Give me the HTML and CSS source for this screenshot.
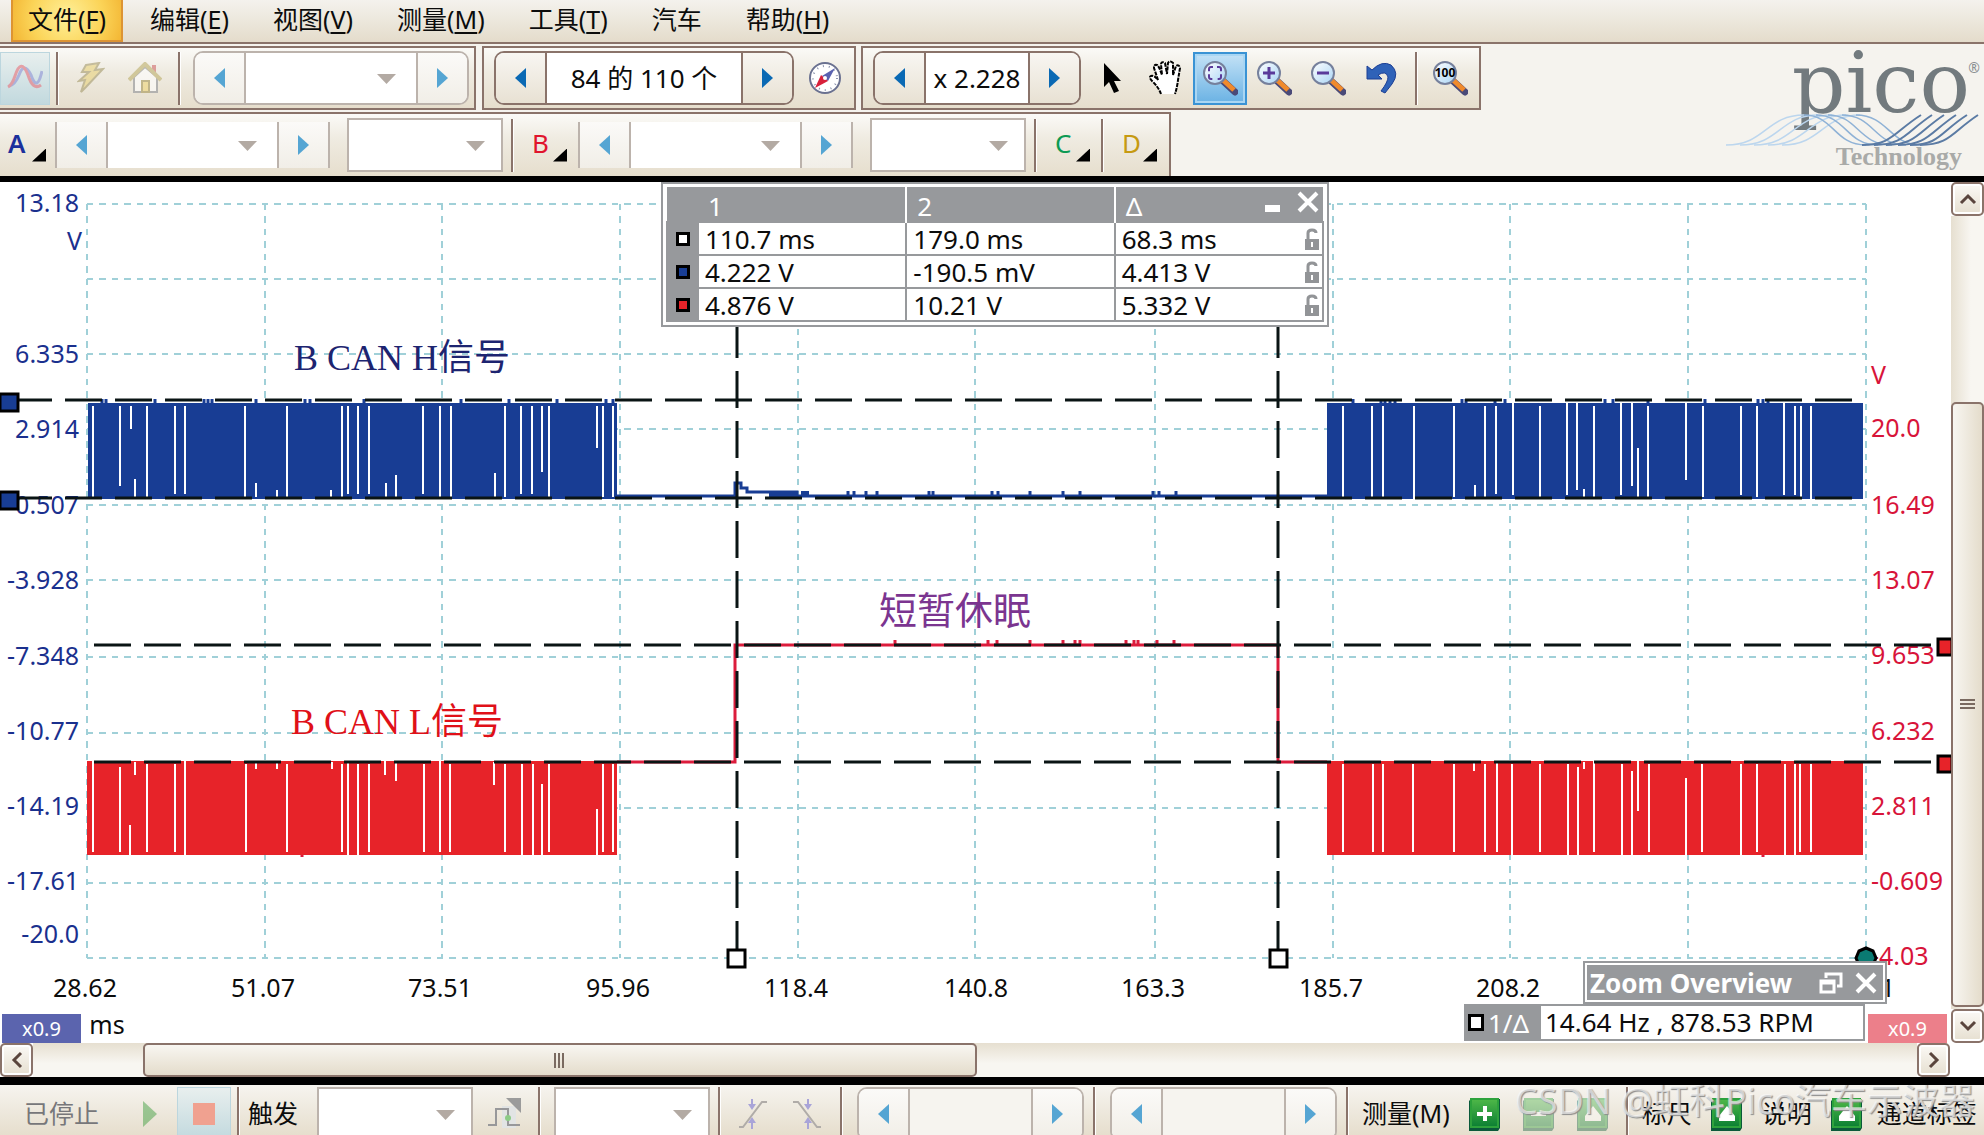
FILE: index.html
```html
<!DOCTYPE html>
<html lang="zh-CN">
<head>
    <meta charset="UTF-8">
    <meta name="viewport" content="width=device-width, initial-scale=1.0">
    <title>PicoScope</title>
    <link rel="stylesheet" href="styles.css">
</head>
<body>
    <!-- shared icon shapes -->
    <svg class="defs" width="0" height="0" aria-hidden="true">
        <defs>
            <linearGradient id="lensFill" x1="0" y1="0" x2="1" y2="1">
                <stop offset="0" stop-color="#ffffff"/>
                <stop offset="1" stop-color="#a9d4f5"/>
            </linearGradient>
            <linearGradient id="greenFill" x1="0" y1="0" x2="0" y2="1">
                <stop offset="0" stop-color="#4fb848"/>
                <stop offset="1" stop-color="#0b7f33"/>
            </linearGradient>
            <symbol id="lens" viewBox="0 0 36 36">
                <path d="M20 20L33 32" stroke="#4a4a78" stroke-width="7" stroke-linecap="round"/>
                <path d="M21 20L32 30" stroke="#f08a2c" stroke-width="5"/>
                <circle cx="13" cy="13" r="11" fill="url(#lensFill)" stroke="#76809c" stroke-width="2"/>
            </symbol>
            <symbol id="lock" viewBox="0 0 16 22">
                <path d="M4 12V5q0-3 4-3t4 3" fill="none" stroke="#929497" stroke-width="3"/>
                <path d="M1 11h14v11H1z" fill="#929497"/>
                <path d="M7 14h2v5H7z" fill="#fff"/>
            </symbol>
            <symbol id="green" viewBox="0 0 34 34">
                <path d="M3 2h29v29l-2 3H1V4z" fill="#0a5a3a"/>
                <path d="M3 2h27v28H3z" fill="url(#greenFill)" stroke="#2da23c" stroke-width="2"/>
            </symbol>
        </defs>
    </svg>

    <nav class="menu">
        <button class="menu-item active">文件(<u>F</u>)</button>
        <button class="menu-item">编辑(<u>E</u>)</button>
        <button class="menu-item">视图(<u>V</u>)</button>
        <button class="menu-item">测量(<u>M</u>)</button>
        <button class="menu-item">工具(<u>T</u>)</button>
        <button class="menu-item">汽车</button>
        <button class="menu-item">帮助(<u>H</u>)</button>
    </nav>

    <header class="top">
        <div class="toolbar">
            <div class="group first">
                <button class="tool pressed faded" aria-label="示波器模式">
                    <svg width="36" height="30" viewBox="0 0 36 30" fill="none" stroke-width="3">
                        <path d="M2 23Q8 22 12 12Q17-2 24 12Q30 30 35 8" stroke="#8f93d6"/>
                        <path d="M1 24Q5 22 8 13Q14-6 21 12Q26 28 34 22" stroke="#e8707a"/>
                    </svg>
                </button>
                <span class="sep"></span>
                <button class="tool faded" aria-label="触发">
                    <svg width="28" height="32" viewBox="0 0 28 32">
                        <path d="M9 3l13-2-4 7 8-1L9 25l-5 5 4-12-6 1 10-9H5z" fill="#e8d27c" stroke="#a59a6a" stroke-width="2"/>
                    </svg>
                </button>
                <button class="tool faded" aria-label="主页">
                    <svg width="34" height="32" viewBox="0 0 34 32">
                        <path d="M24 3h4v10h-4z" fill="#d06a6a"/>
                        <path d="M6 15v15h23V15L17 5z" fill="#fff" stroke="#8f9298" stroke-width="2"/>
                        <path d="M1 18L17 2l16 16" fill="none" stroke="#bdb06c" stroke-width="4"/>
                        <path d="M14 19h7v11h-7z" fill="#efd67a" stroke="#a59555" stroke-width="2"/>
                    </svg>
                </button>
                <span class="sep"></span>
                <div class="spinner off indent">
                    <button class="prev" aria-label="上一个"></button>
                    <span class="combo"><select aria-label="时基"><option></option></select></span>
                    <button class="next" aria-label="下一个"></button>
                </div>
            </div>
            <div class="group">
                <div class="spinner">
                    <button class="prev" aria-label="上一波形"></button>
                    <input class="buffer" type="text" value="84 的 110 个" aria-label="波形缓冲">
                    <button class="next" aria-label="下一波形"></button>
                </div>
                <button class="tool" aria-label="缓冲导航">
                    <svg width="34" height="34" viewBox="0 0 34 34">
                        <circle cx="17" cy="17" r="15" fill="#fff" stroke="#6a7190" stroke-width="2"/>
                        <circle cx="17" cy="17" r="12" fill="none" stroke="#8c93ad" stroke-width="2" stroke-dasharray="1 5"/>
                        <path d="M27 7L20 20l-6-5z" fill="#5a62b0"/>
                        <path d="M7 27l6-13 7 6z" fill="#d8203a"/>
                        <circle cx="17" cy="17" r="2" fill="#fff"/>
                    </svg>
                </button>
            </div>
            <div class="group">
                <div class="spinner">
                    <button class="prev" aria-label="缩小倍率"></button>
                    <input class="factor" type="text" value="x 2.228" aria-label="缩放倍率">
                    <button class="next" aria-label="放大倍率"></button>
                </div>
                <button class="tool" aria-label="选择">
                    <svg width="20" height="32" viewBox="0 0 20 32">
                        <path d="M2 1v24l5-5 5 11 5-2-5-10h7z" fill="#000"/>
                    </svg>
                </button>
                <button class="tool" aria-label="拖动">
                    <svg width="36" height="36" viewBox="0 0 36 36">
                        <path d="M13 34Q11 28 5 22Q0 17 3 16Q6 15 10 20L6 8Q6 4 9 5Q11 6 14 15L13 4Q14 1 17 3L19 14L20 3Q22 0 25 3L25 15L28 6Q31 4 32 8L30 20Q29 28 27 34" fill="#fff" stroke="#000" stroke-width="2" stroke-dasharray="4 1"/>
                    </svg>
                </button>
                <button class="tool selected" aria-label="窗口缩放">
                    <svg width="36" height="36" viewBox="0 0 36 36"><use href="#lens"/><path d="M11 7H9q-2 0-2 2v8q0 2 2 2h2M15 7h2q2 0 2 2v8q0 2-2 2h-2" fill="none" stroke="#5a3a9a" stroke-width="2" stroke-dasharray="7 3"/></svg>
                </button>
                <button class="tool" aria-label="放大">
                    <svg width="36" height="36" viewBox="0 0 36 36"><use href="#lens"/><path d="M13 7v12M7 13h12" stroke="#5a3a9a" stroke-width="3"/></svg>
                </button>
                <button class="tool" aria-label="缩小">
                    <svg width="36" height="36" viewBox="0 0 36 36"><use href="#lens"/><path d="M7 13h12" stroke="#5a3a9a" stroke-width="3"/></svg>
                </button>
                <button class="tool" aria-label="撤销缩放">
                    <svg width="32" height="32" viewBox="0 0 32 32">
                        <path d="M1 4l5 4Q16-2 25 3Q34 11 26 22L19 31l-4-2Q22 20 22 15Q20 8 12 13l4 4H1z" fill="#2f62b8" stroke="#1d3f94"/>
                    </svg>
                </button>
                <span class="sep"></span>
                <button class="tool" aria-label="完整显示">
                    <svg width="36" height="36" viewBox="0 0 36 36"><use href="#lens"/><text x="13" y="17" class="hundred">100</text></svg>
                </button>
            </div>
        </div>

        <div class="toolbar">
            <div class="group channels">
                <button class="channel ch-a">A</button>
                <div class="spinner flat off">
                    <button class="prev" aria-label="A 减小量程"></button>
                    <span class="combo"><select aria-label="A 量程"><option></option></select></span>
                    <button class="next" aria-label="A 增大量程"></button>
                </div>
                <span class="combo boxed"><select aria-label="A 耦合"><option></option></select></span>
                <span class="sep"></span>
                <button class="channel ch-b">B</button>
                <div class="spinner flat off">
                    <button class="prev" aria-label="B 减小量程"></button>
                    <span class="combo"><select aria-label="B 量程"><option></option></select></span>
                    <button class="next" aria-label="B 增大量程"></button>
                </div>
                <span class="combo boxed"><select aria-label="B 耦合"><option></option></select></span>
                <span class="sep"></span>
                <button class="channel ch-c">C</button>
                <span class="sep"></span>
                <button class="channel ch-d">D</button>
            </div>
        </div>

        <div class="logo">
            <span class="logo-name">pico</span><span class="logo-reg">®</span>
            <svg class="logo-wave" width="254" height="36" viewBox="0 0 254 36" fill="none" stroke-width="1.5">
                <g stroke="#bcd6ee">
                    <path d="M0 33C40 33 40 3 78 3"/><path d="M14 33C54 33 54 3 92 3"/>
                    <path d="M28 33C68 33 68 3 106 3"/><path d="M42 33C82 33 82 3 120 3"/>
                    <path d="M56 33C96 33 96 3 134 3"/>
                </g>
                <g stroke="#8fb2d6">
                    <path d="M78 3C108 3 108 33 140 33"/><path d="M90 3C120 3 120 33 152 33"/>
                    <path d="M102 3C132 3 132 33 166 33"/><path d="M116 3C148 3 148 33 180 33"/>
                    <path d="M130 3C162 3 164 33 194 33"/>
                </g>
                <g stroke="#5b7ba4" stroke-width="2">
                    <path d="M136 33C166 33 168 20 195 3"/><path d="M148 33C178 33 180 20 206 3"/>
                    <path d="M160 33C190 33 192 20 218 3"/><path d="M172 33C202 33 204 20 230 3"/>
                    <path d="M184 33C214 33 214 20 241 3"/><path d="M194 33C224 33 226 20 252 3"/>
                </g>
            </svg>
            <span class="logo-sub">Technology</span>
        </div>
    </header>

    <main class="scope">
        <div class="view">
            <svg class="plot" viewBox="0 182 1951 861">
                <g class="grid">
                    <path d="M87 204H1866M87 279H1866M87 354H1866M87 429H1866M87 505H1866M87 580H1866M87 657H1866M87 733H1866M87 808H1866M87 883H1866M87 958H1866"/>
                    <path d="M87 204V958M265 204V958M442 204V958M620 204V958M798 204V958M975 204V958M1155 204V958M1333 204V958M1510 204V958M1688 204V958M1866 204V958"/>
                </g>

                <g class="axis axis-a">
                    <text x="79" y="212">13.18</text>
                    <text x="82" y="250">V</text>
                    <text x="79" y="363">6.335</text>
                    <text x="79" y="438">2.914</text>
                    <text x="79" y="514">0.507</text>
                    <text x="79" y="589">-3.928</text>
                    <text x="79" y="665">-7.348</text>
                    <text x="79" y="740">-10.77</text>
                    <text x="79" y="815">-14.19</text>
                    <text x="79" y="890">-17.61</text>
                    <text x="79" y="943">-20.0</text>
                </g>
                <g class="axis axis-b">
                    <text x="1871" y="384">V</text>
                    <text x="1871" y="437">20.0</text>
                    <text x="1871" y="514">16.49</text>
                    <text x="1871" y="589">13.07</text>
                    <text x="1871" y="664">9.653</text>
                    <text x="1871" y="740">6.232</text>
                    <text x="1871" y="815">2.811</text>
                    <text x="1871" y="890">-0.609</text>
                    <text x="1871" y="965">-4.03</text>
                </g>
                <g class="axis axis-t">
                    <text x="85" y="997">28.62</text>
                    <text x="263" y="997">51.07</text>
                    <text x="440" y="997">73.51</text>
                    <text x="618" y="997">95.96</text>
                    <text x="796" y="997">118.4</text>
                    <text x="976" y="997">140.8</text>
                    <text x="1153" y="997">163.3</text>
                    <text x="1331" y="997">185.7</text>
                    <text x="1508" y="997">208.2</text>
                    <text x="1863" y="997">253.1</text>
                    <text x="107" y="1034">ms</text>
                </g>

                <!-- channel A: CAN H -->
                <g class="trace-a">
                    <path class="burst" d="M88 403H617V499H88zM1327 403H1863V499H1327z"/>
                    <path class="slit" d="M93 406V497M120 406V486M131 406V429M135 479V497M147 406V497M175 406V494M185 406V494M245 406V497M256 483V497M277 490V497M287 406V497M331 490V497M342 406V497M348 406V494M358 406V494M369 406V494M386 483V497M396 475V497M423 406V494M440 406V497M451 406V497M495 473V497M505 406V497M521 406V494M532 406V494M542 406V472M549 406V497M597 406V448M603 406V497M613 406V497"/>
                    <path class="slit" d="M1343 406V497M1372 406V497M1383 406V497M1414 406V499M1454 406V497M1475 485V497M1485 406V497M1496 406V494M1513 403V495M1540 406V497M1567 403V495M1577 403V490M1584 489V497M1594 406V497M1621 403V495M1632 403V486M1638 448V497M1648 406V497M1686 403V480M1703 406V497M1741 406V495M1757 406V497M1784 403V495M1795 406V495M1801 406V497M1811 406V499"/>
                    <path class="line" d="M102 404V399M106 404V399M155 404V399M204 404V399M208 404V399M212 404V399M256 404V399M305 404V399M310 404V399M364 404V399M461 404V399M509 404V399M557 404V399M606 404V399M613 404V399M1353 404V399M1381 404V399M1385 404V399M1390 404V399M1395 404V399M1462 404V399M1466 404V399M1495 404V399M1505 404V399M1605 404V399M1613 404V399M1648 404V399M1705 404V399M1758 404V399M1763 404V399M1768 404V399"/>
                    <path class="line" d="M617 496H735V483H741V488H747V492H797V496H1327"/>
                    <path class="burst" d="M769 491h28v6h-28zM801 491h8v6h-8z"/>
                    <path class="line" d="M848 496v-5M854 496v-5M866 496v-5M877 496v-5M929 496v-5M933 496v-5M992 496v-5M998 496v-5M1030 496v-5M1063 496v-5M1080 496v-5M1153 496v-5M1159 496v-5M1176 496v-5"/>
                </g>

                <!-- channel B: CAN L -->
                <g class="trace-b">
                    <path class="burst" d="M87 761H617V855H87zM1327 761H1863V855H1327z"/>
                    <path class="slit" d="M93 761V852M120 767V852M130 825V855M135 762V775M147 764V852M175 764V852M185 761V855M246 764V852M256 762V769M277 762V769M287 764V852M332 762V769M342 764V852M348 761V855M358 764V855M369 764V852M385 761V775M396 762V781M424 764V852M440 761V852M450 764V852M494 762V785M505 764V852M522 764V855M533 764V855M542 784V855M549 764V852M597 809V855M603 764V852M613 764V852"/>
                    <path class="slit" d="M1343 764V852M1373 764V852M1383 764V852M1413 764V852M1454 764V852M1474 762V771M1485 764V852M1497 761V852M1512 764V855M1540 764V852M1568 764V855M1578 767V855M1584 762V769M1594 761V852M1622 764V855M1632 771V855M1638 761V811M1649 764V852M1686 778V855M1702 764V852M1741 764V855M1757 764V852M1785 764V855M1795 764V855M1800 764V852M1811 764V852"/>
                    <path class="line" d="M617 762H735V645H1278V762H1327"/>
                    <path class="line" d="M302 855v2M1763 855v2M895 645v-5M988 645v-5M997 645v-5M1030 645v-5M1063 645v-5M1075 645v-5M1080 645v-5M1126 645v-5M1134 645v-5M1138 645v-5M1157 645v-5M1174 645v-5"/>
                </g>

                <!-- rulers -->
                <g class="ruler">
                    <path d="M15 400H1860M15 498H1860"/>
                    <path d="M94 645H1937M94 762H1937"/>
                    <path d="M737 321V949M1278 321V949"/>
                </g>
                <g class="handle">
                    <path class="fill-a" d="M0 394H18V411H0zM0 492H18V509H0z"/>
                    <path class="fill-b" d="M1938 639H1952V655H1938zM1938 756H1952V772H1938z"/>
                    <path class="fill-t" d="M728 950H745V967H728zM1270 950H1287V967H1270z"/>
                    <path class="fill-zoom" d="M1856 958l3-7 7-3 7 3 3 7-3 7H1859z"/>
                </g>

                <g class="note">
                    <text x="294" y="370" class="note-h">B CAN H信号</text>
                    <text x="291" y="734" class="note-l">B CAN L信号</text>
                    <text x="879" y="624" class="note-sleep">短暂休眠</text>
                </g>
            </svg>

            <div class="rulers-box">
                <table>
                    <thead>
                        <tr>
                            <th></th>
                            <th>1</th>
                            <th>2</th>
                            <th>Δ
                                <span class="win-buttons">
                                    <button aria-label="最小化"><svg width="16" height="22" viewBox="0 0 16 22"><path d="M0 14h15v7H0z" fill="#fff"/></svg></button>
                                    <button aria-label="关闭"><svg width="22" height="22" viewBox="0 0 22 22"><path d="M2 2l18 18M20 2L2 20" stroke="#fff" stroke-width="4"/></svg></button>
                                </span>
                            </th>
                        </tr>
                    </thead>
                    <tbody>
                        <tr>
                            <td><i class="mark white"></i></td>
                            <td>110.7 ms</td>
                            <td>179.0 ms</td>
                            <td>68.3 ms <svg class="lock" width="16" height="22"><use href="#lock"/></svg></td>
                        </tr>
                        <tr>
                            <td><i class="mark blue"></i></td>
                            <td>4.222 V</td>
                            <td>-190.5 mV</td>
                            <td>4.413 V <svg class="lock" width="16" height="22"><use href="#lock"/></svg></td>
                        </tr>
                        <tr>
                            <td><i class="mark red"></i></td>
                            <td>4.876 V</td>
                            <td>10.21 V</td>
                            <td>5.332 V <svg class="lock" width="16" height="22"><use href="#lock"/></svg></td>
                        </tr>
                    </tbody>
                </table>
            </div>

            <button class="scale scale-a">x0.9</button>
            <button class="scale scale-b">x0.9</button>

            <div class="freq">
                <span class="freq-key"><i class="mark white"></i>1/Δ</span>
                <span class="freq-value">14.64 Hz , 878.53 RPM</span>
            </div>
            <div class="overview">
                <span class="overview-title">Zoom Overview</span>
                <button aria-label="还原"><svg width="24" height="24" viewBox="0 0 24 24" fill="none" stroke="#fff" stroke-width="3"><path d="M7 7V3h15v12h-4M2 10h13v11H2zM2 12h13"/></svg></button>
                <button aria-label="关闭"><svg width="22" height="22" viewBox="0 0 22 22"><path d="M2 2l18 18M20 2L2 20" stroke="#fff" stroke-width="4"/></svg></button>
            </div>
        </div>

        <div class="vscroll">
            <button aria-label="向上"><svg width="18" height="12" viewBox="0 0 18 12"><path d="M2 10l7-7 7 7"/></svg></button>
            <div class="track"><div class="thumb"><i class="grip"></i></div></div>
            <button aria-label="向下"><svg width="18" height="12" viewBox="0 0 18 12"><path d="M2 2l7 7 7-7"/></svg></button>
        </div>
    </main>

    <div class="hscroll">
        <button aria-label="向左"><svg width="12" height="18" viewBox="0 0 12 18"><path d="M10 2L3 9l7 7"/></svg></button>
        <div class="track"><div class="thumb"><i class="grip"></i></div></div>
        <button aria-label="向右"><svg width="12" height="18" viewBox="0 0 12 18"><path d="M2 2l7 7-7 7"/></svg></button>
    </div>

    <footer class="bottom">
        <span class="label stopped">已停止</span>
        <button class="tool dim" aria-label="启动"><svg width="16" height="26" viewBox="0 0 16 26"><path d="M1 0l14 13L1 26z" fill="#1c9020"/></svg></button>
        <button class="tool pressed" aria-label="停止"><svg width="22" height="22" viewBox="0 0 22 22"><path d="M0 0h22v22H0z" fill="#f0a190"/></svg></button>
        <span class="sep"></span>
        <label class="label" for="trigger">触发</label>
        <span class="combo boxed"><select id="trigger"><option></option></select></span>
        <button class="tool" aria-label="高级触发">
            <svg width="34" height="32" viewBox="0 0 34 32" fill="none">
                <path d="M14 8h14v22H14z" fill="#e2e4e4"/>
                <path d="M0 27h8V11h12v16h12" stroke="#98989a" stroke-width="2"/>
                <path d="M18 0h15v15z" fill="#9b9b9b"/>
                <circle cx="20" cy="20" r="3" fill="#8ccb86"/>
            </svg>
        </button>
        <span class="sep"></span>
        <span class="combo boxed plain"><select aria-label="触发源"><option></option></select></span>
        <span class="sep"></span>
        <button class="tool" aria-label="上升沿"><svg width="32" height="30" viewBox="0 0 32 30" fill="none"><path d="M2 28h4L25 3h5" stroke="#b0aca8" stroke-width="2"/><path d="M15 0v6M15 30v-8" stroke="#a9a4d8" stroke-width="2"/><path d="M11 5h8l-4 6zM11 24h8l-4-6z" fill="#a9a4d8"/></svg></button>
        <button class="tool" aria-label="下降沿"><svg width="32" height="30" viewBox="0 0 32 30" fill="none"><path d="M2 3h5l19 25h4" stroke="#b0aca8" stroke-width="2"/><path d="M17 0v6M17 30v-8" stroke="#a9a4d8" stroke-width="2"/><path d="M13 5h8l-4 6zM13 24h8l-4-6z" fill="#a9a4d8"/></svg></button>
        <span class="sep"></span>
        <div class="spinner off small">
            <button class="prev" aria-label="降低阈值"></button>
            <input type="text" aria-label="阈值" disabled>
            <button class="next" aria-label="提高阈值"></button>
        </div>
        <span class="sep"></span>
        <div class="spinner off small">
            <button class="prev" aria-label="减少预触发"></button>
            <input type="text" aria-label="预触发" disabled>
            <button class="next" aria-label="增加预触发"></button>
        </div>
        <span class="sep"></span>
        <span class="label tight">测量(M)</span>
        <button class="tool" aria-label="添加测量"><svg width="34" height="34" viewBox="0 0 34 34"><use href="#green"/><path d="M17 9v15M9 17h15" stroke="#fff" stroke-width="4"/></svg></button>
        <button class="tool dim" aria-label="删除测量"><svg width="34" height="34" viewBox="0 0 34 34"><use href="#green"/><path d="M9 17h15" stroke="#fff" stroke-width="4"/></svg></button>
        <button class="tool dim" aria-label="编辑测量"><svg width="34" height="34" viewBox="0 0 34 34"><use href="#green"/><path d="M17 9l8 10v5H9v-5z" fill="#fff"/></svg></button>
        <span class="sep"></span>
        <span class="label tight">标尺</span>
        <button class="tool" aria-label="显示标尺"><svg width="34" height="34" viewBox="0 0 34 34"><use href="#green"/><path d="M17 9l8 10v5H9v-5z" fill="#fff"/></svg></button>
        <span class="label tight">说明</span>
        <button class="tool" aria-label="显示说明"><svg width="34" height="34" viewBox="0 0 34 34"><use href="#green"/><path d="M17 9l8 10v5H9v-5z" fill="#fff"/></svg></button>
        <span class="label">通道标签</span>
        <span class="watermark">CSDN @虹科Pico汽车示波器</span>
    </footer>
</body>
</html>
```

FILE: styles.css
```css
* {
    margin: 0;
    padding: 0;
    box-sizing: border-box;
}

body {
    font-family: "Noto Sans", "Noto Sans CJK SC", sans-serif;
    font-size: 26px;
    line-height: 34px;
    color: #0c0c0c;
    background: #f5f3ee;
    min-height: 100vh;
    overflow: hidden;
}

button, input, select {
    font: inherit;
    color: inherit;
    border: none;
    background: none;
    border-radius: 0;
    appearance: none;
}

svg {
    display: block;
}

.defs {
    position: absolute;
}

/* menu */
.menu {
    display: flex;
    height: 44px;
    padding: 0 6px 0 6px;
    font-size: 25px;
    background: linear-gradient(#f4f2ed, #e4dccb);
    border-bottom: 2px solid #8a736a;
}

.menu-item {
    height: 42px;
    margin: 0 5px;
    padding: 0 17px 4px;
    white-space: nowrap;
}

.menu-item u {
    text-underline-offset: 3px;
}

.menu-item.active {
    background: radial-gradient(circle at 50% 40%, #fff09a, #fbd458 60%, #f3b634);
    border: 2px solid #dd9433;
    border-top: none;
    padding: 0 15px 2px;
}

/* toolbars */
.top {
    position: relative;
    border-bottom: 6px solid #000;
}

.toolbar {
    display: flex;
    padding-top: 2px;
}

.toolbar + .toolbar {
    height: 66px;
}

.group {
    display: flex;
    align-items: center;
    height: 64px;
    padding: 0 2px 0 10px;
    margin-right: 5px;
    border: 2px solid #8a736a;
    background: linear-gradient(#fbfaf7, #efebe1 40%, #e6decd);
}

.group.first {
    padding: 0 5px 0 0;
    border-left: none;
    margin-right: 6px;
}

.group.channels {
    padding: 0 7px 0 0;
    border-left: none;
    border-bottom: none;
}

.sep {
    flex: none;
    width: 2px;
    height: 53px;
    margin: 0 6px;
    background: #8a736a;
    box-shadow: 1px 0 #fff;
}

.tool {
    flex: none;
    display: flex;
    align-items: center;
    justify-content: center;
    width: 54px;
    height: 53px;
}

.tool.pressed {
    background: linear-gradient(#e8efee, #c2d9de);
    border: 1px solid #bcd6de;
}

.tool.selected {
    background: linear-gradient(#c4e2f6, #6ab2e4);
    border: 2px solid #3a93d4;
    box-shadow: inset 0 0 0 2px #a9d6f3;
}

.group.first .pressed {
    width: 50px;
}

.faded svg {
    opacity: 0.6;
}

.dim svg {
    opacity: 0.4;
}

.hundred {
    font-size: 12px;
    font-weight: bold;
    text-anchor: middle;
}

.spinner {
    flex: none;
    display: flex;
    height: 54px;
    border: 2px solid #8a736a;
    border-radius: 10px;
    background: #fff;
    overflow: hidden;
}

.spinner.indent {
    margin-left: 7px;
}

.spinner + .tool {
    margin-left: 4px;
}

.spinner button {
    position: relative;
    width: 51px;
    background: linear-gradient(#f8f6f2, #e8e1d3);
}

.spinner .prev {
    border-right: 2px solid #8a736a;
}

.spinner .next {
    border-left: 2px solid #8a736a;
}

.spinner button::after {
    content: "";
    display: block;
    width: 11px;
    height: 20px;
    margin: 0 auto;
    background: #0a69b4;
    clip-path: polygon(100% 0, 100% 100%, 0 50%);
}

.spinner .next::after {
    clip-path: polygon(0 0, 100% 50%, 0 100%);
}

.spinner.off, .spinner.off button {
    border-color: #bcb3ac;
}

.spinner.off button {
    background: linear-gradient(#fbfaf8, #f1eee7);
}

.spinner.off button::after {
    background: #55a5d3;
}

.spinner input {
    text-align: center;
}

.spinner .buffer {
    width: 194px;
}

.spinner .factor {
    width: 102px;
}

.spinner.small input {
    width: 121px;
    background: #f6f4ef;
}

.spinner.flat {
    height: 46px;
    margin-left: 6px;
    border-width: 0 2px;
    border-radius: 0;
}

.combo {
    flex: none;
    position: relative;
    width: 170px;
    background: #fff;
}

.spinner.flat .combo {
    width: 169px;
}

.combo select {
    display: block;
    width: 100%;
    height: 100%;
}

.combo::after {
    content: "";
    position: absolute;
    right: 20px;
    top: 50%;
    width: 19px;
    height: 10px;
    margin-top: -4px;
    background: #b3aaa3;
    clip-path: polygon(0 0, 100% 0, 50% 100%);
    pointer-events: none;
}

.combo.boxed {
    width: 156px;
    height: 54px;
    margin: 0 2px 0 17px;
    border: 2px solid #bcb3ac;
}

.combo.boxed::after {
    right: 16px;
}

.channel {
    position: relative;
    width: 53px;
    height: 53px;
    padding: 0 0 4px 13px;
    text-align: left;
}

.channel::after {
    content: "";
    position: absolute;
    right: 5px;
    bottom: 10px;
    width: 14px;
    height: 13px;
    background: #000;
    clip-path: polygon(100% 0, 100% 100%, 0 100%);
}

.ch-a {
    width: 49px;
    padding-left: 8px;
    font-weight: 600;
    color: #1b309c;
}

.ch-a::after {
    right: 3px;
}

.ch-b {
    color: #e0142d;
}

.ch-c {
    color: #0c9a53;
}

.ch-d {
    color: #c69a12;
}

/* logo */
.logo {
    position: absolute;
    right: 4px;
    top: 6px;
    width: 254px;
    height: 120px;
}

.logo-name {
    position: absolute;
    right: 10px;
    top: -9px;
    font-family: "DejaVu Serif", serif;
    font-size: 84px;
    line-height: 84px;
    color: #727a7e;
}

.logo-reg {
    position: absolute;
    right: 0;
    top: 8px;
    font-size: 14px;
    line-height: 20px;
    color: #8a8f92;
}

.logo-wave {
    position: absolute;
    left: 0;
    top: 62px;
}

.logo-sub {
    position: absolute;
    right: 18px;
    top: 90px;
    font-family: "Liberation Serif", serif;
    font-size: 26px;
    font-weight: bold;
    color: #a9aaa8;
}

/* scope */
.scope {
    display: flex;
    background: #fff;
}

.view {
    position: relative;
    flex: 1;
    min-width: 0;
}

.plot {
    width: 100%;
    height: auto;
}

.grid path {
    stroke: #a0d0d8;
    stroke-width: 2;
    stroke-dasharray: 6 6 7 6;
    fill: none;
}

.axis text {
    font-size: 25px;
}

.axis-a {
    fill: #1a308e;
    text-anchor: end;
}

.axis-b {
    fill: #d8143a;
}

.axis-t {
    fill: #0c0c0c;
    text-anchor: middle;
}

.trace-a .burst {
    fill: #183d94;
}

.trace-b .burst {
    fill: #e72329;
}

.slit {
    stroke: #fff;
    stroke-width: 2;
}

.line {
    fill: none;
    stroke-width: 3;
}

.trace-a .line {
    stroke: #183d94;
}

.trace-b .line {
    stroke: #dc1c3c;
}

.ruler path {
    fill: none;
    stroke: #0a1414;
    stroke-width: 3;
    stroke-dasharray: 37 13;
}

.handle path {
    stroke: #000;
    stroke-width: 3;
}

.handle .fill-a {
    fill: #183d94;
}

.handle .fill-b {
    fill: #e72329;
}

.handle .fill-t {
    fill: #fff;
}

.handle .fill-zoom {
    fill: #0a7a72;
}

.note text {
    font-family: "Liberation Serif", "Noto Sans CJK SC", serif;
    font-size: 36px;
}

.note-h {
    fill: #1d2470;
}

.note-l {
    fill: #e01018;
}

.note .note-sleep {
    fill: #7b3590;
    font-size: 38px;
}

/* floating boxes */
.rulers-box {
    position: absolute;
    left: 661px;
    top: 0;
    width: 668px;
    padding: 3px;
    background: #fff;
    border: 2px solid #97999c;
}

.rulers-box table {
    width: 100%;
    table-layout: fixed;
    border-collapse: collapse;
    background: #fff;
}

.rulers-box th {
    position: relative;
    height: 35px;
    padding: 4px 0 0 10px;
    font-weight: normal;
    line-height: 30px;
    text-align: left;
    color: #fff;
    background: #97999c;
}

.rulers-box th + th + th {
    border-left: 2px solid #fff;
}

.rulers-box th:first-child {
    width: 31px;
    padding: 0;
}

.rulers-box td {
    position: relative;
    height: 33px;
    padding-left: 6px;
    line-height: 30px;
    white-space: nowrap;
    border: 2px solid #97999c;
}

.rulers-box td:first-child {
    padding: 0;
    background: #97999c;
}

.mark {
    display: block;
    width: 14px;
    height: 14px;
    margin: 0 auto;
    border: 3px solid #000;
}

.white {
    background: #fff;
}

.blue {
    background: #183d94;
}

.red {
    background: #e72329;
}

.lock {
    position: absolute;
    right: 2px;
    top: 5px;
}

.win-buttons {
    position: absolute;
    right: 4px;
    top: 4px;
    display: flex;
    gap: 16px;
}

.scale {
    position: absolute;
    bottom: 0;
    width: 79px;
    height: 29px;
    font-size: 20px;
    line-height: 28px;
    color: #fff;
}

.scale-a {
    left: 2px;
    background: #5b64ae;
}

.scale-b {
    right: 4px;
    background: #ec7f8a;
}

.freq {
    position: absolute;
    right: 86px;
    bottom: 2px;
    display: flex;
    width: 401px;
    height: 37px;
    line-height: 32px;
    background: #fff;
    border: 2px solid #97999c;
}

.freq-key {
    display: flex;
    align-items: center;
    gap: 4px;
    width: 75px;
    padding-left: 2px;
    color: #fff;
    background: #97999c;
}

.freq-key .mark {
    width: 16px;
    height: 17px;
    margin: 0;
}

.freq-value {
    padding-left: 4px;
    white-space: nowrap;
}

.overview {
    position: absolute;
    right: 64px;
    bottom: 39px;
    display: flex;
    align-items: center;
    gap: 12px;
    width: 304px;
    height: 43px;
    padding: 0 8px 0 5px;
    background: #97999c;
    border: 2px solid #97999c;
    box-shadow: inset 0 0 0 2px #fff;
}

.overview-title {
    flex: 1;
    font-weight: bold;
    color: #fff;
    white-space: nowrap;
}

/* scrollbars */
.vscroll, .hscroll {
    display: flex;
}

.vscroll {
    flex-direction: column;
    width: 33px;
}

.hscroll {
    height: 34px;
    padding-right: 34px;
    background: #fff;
}

.vscroll button, .hscroll button {
    flex: none;
    display: flex;
    align-items: center;
    justify-content: center;
    width: 33px;
    height: 34px;
    background: linear-gradient(#fbf9f5, #e6dfd0);
    border: 2px solid #8a736a;
    border-radius: 5px;
    box-shadow: inset 0 0 0 2px #fff;
}

.vscroll svg, .hscroll svg {
    fill: none;
    stroke: #5a453d;
    stroke-width: 3;
}

.vscroll .track {
    flex: 1;
    padding: 186px 0 2px;
    background: linear-gradient(90deg, #e6dfd0, #f8f6f1 60%);
}

.hscroll .track {
    flex: 1;
    padding-left: 110px;
    background: linear-gradient(#e6dfd0, #f8f6f1 60%);
}

.thumb {
    display: flex;
    align-items: center;
    justify-content: center;
    height: 100%;
    border: 2px solid #8a736a;
    border-radius: 5px;
}

.vscroll .thumb {
    background: linear-gradient(90deg, #f8f6f1, #e4dccb);
}

.hscroll .thumb {
    width: 47%;
    background: linear-gradient(#f8f6f1, #e4dccb);
}

.hscroll .grip {
    width: 11px;
    height: 15px;
    background: repeating-linear-gradient(90deg, #7a6a60 0 2px, transparent 2px 4px);
}

.vscroll .grip {
    width: 15px;
    height: 11px;
    background: repeating-linear-gradient(#7a6a60 0 2px, transparent 2px 4px);
}

/* bottom toolbar */
.bottom {
    position: relative;
    display: flex;
    align-items: flex-start;
    height: 58px;
    padding: 2px 0 0 24px;
    overflow: hidden;
    background: linear-gradient(#f6f4ef, #e6decd);
    border-top: 8px solid #000;
}

.bottom .label {
    flex: none;
    margin: 9px 0 0 3px;
    font-size: 25px;
    white-space: nowrap;
}

.bottom .stopped {
    width: 99px;
    margin-left: 0;
    color: #77777a;
}

.bottom .label.tight {
    margin: 9px 8px 0 8px;
}

.bottom .combo.boxed {
    margin-left: 19px;
}

.bottom .combo.plain {
    margin-left: 8px;
}

.bottom .combo + .tool {
    margin-left: 3px;
}

.bottom .spinner {
    margin: 0 3px 0 9px;
}

.watermark {
    position: absolute;
    right: 9px;
    top: -6px;
    font-size: 36px;
    line-height: 44px;
    color: rgba(255, 255, 255, 0.6);
    text-shadow: 1px 1px 1px #8c8c8c;
    white-space: nowrap;
}
```
